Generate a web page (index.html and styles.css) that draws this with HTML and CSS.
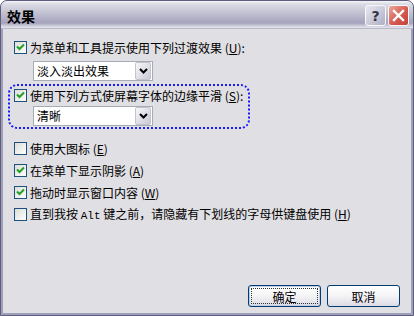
FILE: index.html
```html
<!DOCTYPE html>
<html>
<head>
<meta charset="utf-8">
<link rel="stylesheet" href="styles.css">
</head>
<body>
<div class="window">
  <div class="titlebar">
    <span class="title">效果</span>
    <div class="tbtns">
      <div class="tb help">?</div>
      <div class="tb close">
        <svg width="13" height="13" viewBox="0 0 13 13"><path d="M2 2 L11 11 M11 2 L2 11" stroke="#fff" stroke-width="2.4" stroke-linecap="square"/></svg>
      </div>
    </div>
  </div>
  <div class="client">
    <div class="row r1">
      <span class="cb on"><svg width="11" height="11" viewBox="0 0 11 11"><path d="M2 4.5 L4.5 7 L9 2.5" fill="none" stroke="#21a121" stroke-width="2"/></svg></span>
      <span class="lbl">为菜单和工具提示使用下列过渡效果 (<u>U</u>):</span>
    </div>
    <div class="combo c1"><span class="val">淡入淡出效果</span><span class="dd"><svg width="9" height="6" viewBox="0 0 9 6"><path d="M1 1 L4.5 4.5 L8 1" fill="none" stroke="#000" stroke-width="2"/></svg></span></div>
    <div class="focusgroup">
      <div class="row">
        <span class="cb on"><svg width="11" height="11" viewBox="0 0 11 11"><path d="M2 4.5 L4.5 7 L9 2.5" fill="none" stroke="#21a121" stroke-width="2"/></svg></span>
        <span class="lbl">使用下列方式使屏幕字体的边缘平滑 (<u>S</u>):</span>
      </div>
      <div class="combo c2"><span class="val">清晰</span><span class="dd"><svg width="9" height="6" viewBox="0 0 9 6"><path d="M1 1 L4.5 4.5 L8 1" fill="none" stroke="#000" stroke-width="2"/></svg></span></div>
    </div>
    <div class="row r3">
      <span class="cb"></span>
      <span class="lbl">使用大图标 (<u>E</u>)</span>
    </div>
    <div class="row rn">
      <span class="cb on"><svg width="11" height="11" viewBox="0 0 11 11"><path d="M2 4.5 L4.5 7 L9 2.5" fill="none" stroke="#21a121" stroke-width="2"/></svg></span>
      <span class="lbl">在菜单下显示阴影 (<u>A</u>)</span>
    </div>
    <div class="row rn">
      <span class="cb on"><svg width="11" height="11" viewBox="0 0 11 11"><path d="M2 4.5 L4.5 7 L9 2.5" fill="none" stroke="#21a121" stroke-width="2"/></svg></span>
      <span class="lbl">拖动时显示窗口内容 (<u>W</u>)</span>
    </div>
    <div class="row rn">
      <span class="cb"></span>
      <span class="lbl">直到我按 <span class="mono">Alt</span> 键之前，请隐藏有下划线的字母供键盘使用 (<u>H</u>)</span>
    </div>
    <div class="buttons">
      <div class="btn default"><span class="focus">确定</span></div>
      <div class="btn">取消</div>
    </div>
  </div>
</div>
</body>
</html>
```

FILE: styles.css
```css
html, body {
  margin: 0;
  padding: 0;
  background: #ffffff;
}
body {
  width: 414px;
  height: 316px;
  overflow: hidden;
  font-family: "Noto Sans CJK SC", "Liberation Sans", sans-serif;
  font-size: 12px;
  color: #000;
}
.window {
  box-sizing: border-box;
  width: 414px;
  height: 316px;
  border: 1px solid #5e5d7e;
  border-radius: 7px 7px 0 0;
  background: #a09fba;
  display: flex;
  flex-direction: column;
}
.titlebar {
  height: 28px;
  flex: none;
  display: flex;
  align-items: center;
  padding-left: 6px;
  border-radius: 6px 6px 0 0;
  background: linear-gradient(to bottom, #f4f4f8 0px, #dcdce6 3px, #cacad8 9px, #b6b5ca 16px, #a4a3bc 22px, #cfcfdc 25px, #e6e6ee 27px, #8c8ba8 28px);
}
.title {
  font-weight: bold;
  font-size: 14px;
  color: #000;
  margin-top: 1px;
  letter-spacing: 0px;
}
.tbtns {
  margin-left: auto;
  margin-right: 4px;
  display: flex;
  gap: 2px;
  align-self: flex-start;
  margin-top: 4px;
}
.tb {
  box-sizing: border-box;
  width: 21px;
  height: 21px;
  border: 1px solid #f8f8fb;
  border-radius: 3px;
  display: flex;
  align-items: center;
  justify-content: center;
}
.help {
  background: linear-gradient(to bottom right, #e8e8f0, #b0afc4);
  color: #333344;
  font-family: "DejaVu Sans", sans-serif;
  font-weight: bold;
  font-size: 14px;
  line-height: 1;
}
.close {
  background: linear-gradient(to bottom right, #eda79c, #d45a50 55%, #c24038);
}
.client {
  flex: 1;
  margin: 0 2px 2px 2px;
  background: #e0dfe3;
  padding: 12px 11px 6px 11px;
  display: flex;
  flex-direction: column;
}
.row {
  display: flex;
  align-items: center;
  height: 13px;
  white-space: nowrap;
}
.lbl {
  margin-left: 3px;
  line-height: 13px;
}
.lbl u {
  text-decoration: underline;
}
.mono {
  font-family: "Liberation Mono", monospace;
  font-size: 11px;
}
.cb {
  box-sizing: border-box;
  width: 13px;
  height: 13px;
  flex: none;
  border: 1px solid #1c5180;
  background: linear-gradient(to bottom right, #dcdcd7, #ffffff);
  display: flex;
  align-items: center;
  justify-content: center;
}
.combo {
  box-sizing: border-box;
  width: 120px;
  height: 20px;
  border: 1px solid #a5acb5;
  background: #fff;
  display: flex;
  align-items: stretch;
}
.c1 {
  margin-top: 7px;
  margin-left: 19px;
}
.c2 {
  margin-top: 4px;
  margin-left: 19px;
}
.val {
  flex: 1;
  padding-left: 3px;
  line-height: 18px;
}
.dd {
  box-sizing: border-box;
  width: 16px;
  margin: 0 1px 0 0;
  border: 1px solid #c3c3d0;
  border-radius: 2px;
  background: linear-gradient(to bottom right, #f8f8fa, #c8c8d6);
  display: flex;
  align-items: center;
  justify-content: center;
}
.focusgroup {
  box-sizing: border-box;
  margin-top: 3px;
  margin-left: -6px;
  width: 242px;
  height: 45px;
  border: 2px dotted #1a1aff;
  border-radius: 9px;
  padding: 3px 0 0 4px;
}
.r3 {
  margin-top: 13px;
}
.rn {
  margin-top: 9px;
}
.buttons {
  margin-top: auto;
  display: flex;
  justify-content: flex-end;
  gap: 6px;
}
.btn {
  box-sizing: border-box;
  width: 73px;
  height: 22px;
  border: 1px solid #003c74;
  border-radius: 3px;
  background: linear-gradient(to bottom, #ffffff, #f4f4f6 50%, #dcdbe4);
  display: flex;
  align-items: center;
  justify-content: center;
  font-size: 12px;
}
.default {
  box-shadow: inset 0 0 0 1px #c0cde4;
}
.focus {
  box-sizing: border-box;
  width: 67px;
  height: 16px;
  border: 1px dotted #333;
  display: flex;
  align-items: center;
  justify-content: center;
}
```
